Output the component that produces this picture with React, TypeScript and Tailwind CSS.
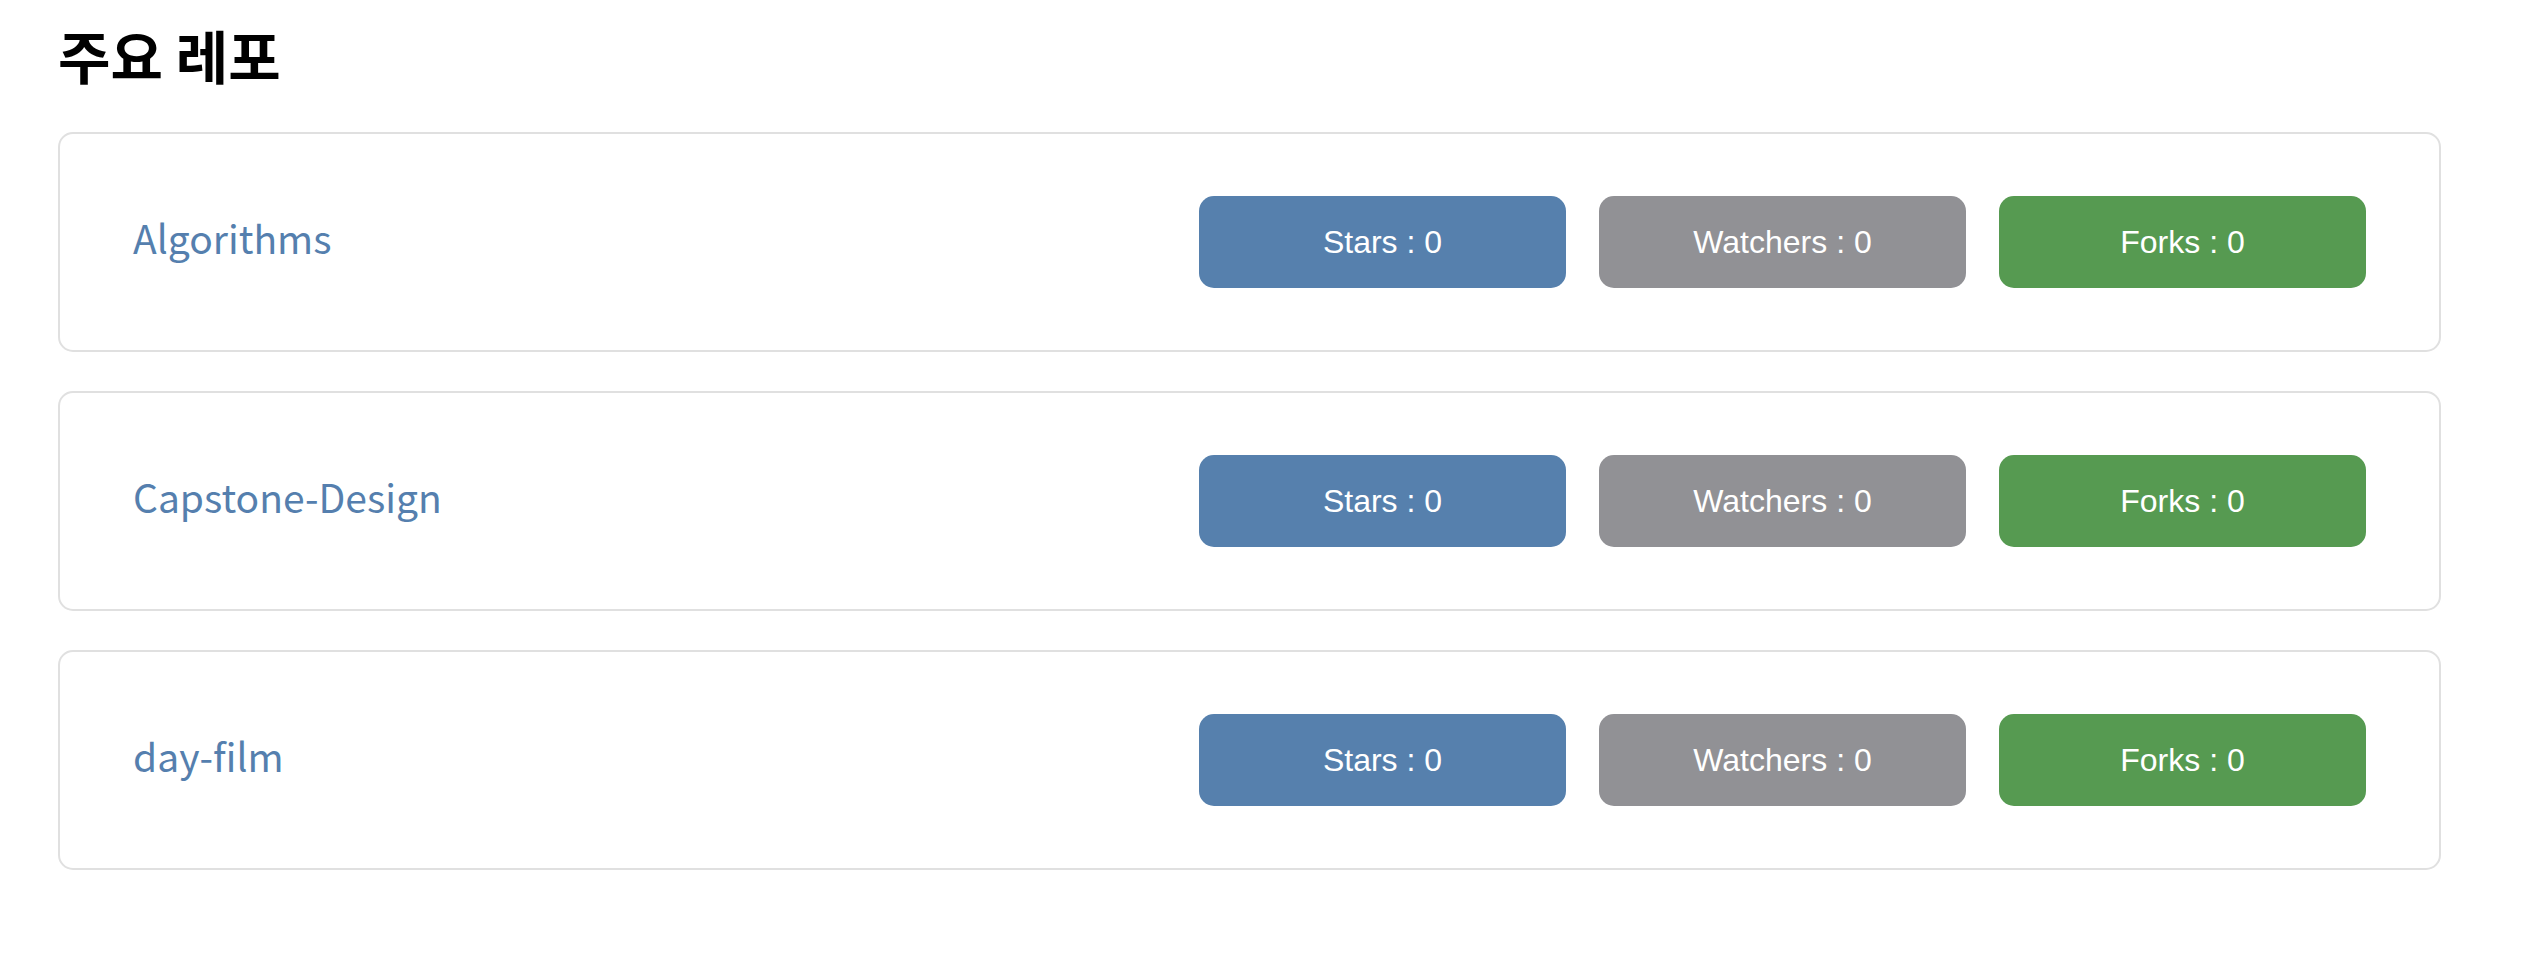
const REPOS = [
  { name: 'Algorithms', stars: 0, watchers: 0, forks: 0 },
  { name: 'Capstone-Design', stars: 0, watchers: 0, forks: 0 },
  { name: 'day-film', stars: 0, watchers: 0, forks: 0 },
];

function RepoCard({ name, stars, watchers, forks }: (typeof REPOS)[number]) {
  return (
    <div className="flex h-[220px] items-center justify-between rounded-[15px] border-2 border-[#e0e0e0] bg-white pl-[73px] pr-[73px]">
      <a
        href="#"
        className="pb-[10px] text-[39px] text-[#557fae] [font-family:'Noto_Sans_CJK_KR','Noto_Sans',sans-serif]"
      >
        {name}
      </a>
      <div className="flex gap-[33px] text-[32px] text-white [font-family:'Liberation_Sans',Arial,sans-serif]">
        <span className="flex h-[92px] w-[367px] items-center justify-center rounded-[15px] bg-[#5680ad]">
          Stars : {stars}
        </span>
        <span className="flex h-[92px] w-[367px] items-center justify-center rounded-[15px] bg-[#919195]">
          Watchers : {watchers}
        </span>
        <span className="flex h-[92px] w-[367px] items-center justify-center rounded-[15px] bg-[#569a51]">
          Forks : {forks}
        </span>
      </div>
    </div>
  );
}

export default function App() {
  return (
    <div className="min-h-screen bg-white pl-[58px] pr-[105px] pt-[18px]">
      <h2 className="text-[57px] font-bold leading-[72px] text-black [font-family:'Noto_Sans_CJK_KR',sans-serif]">
        주요 레포
      </h2>
      <div className="mt-[42px] flex flex-col gap-[39px]">
        {REPOS.map((repo) => (
          <RepoCard key={repo.name} {...repo} />
        ))}
      </div>
    </div>
  );
}
